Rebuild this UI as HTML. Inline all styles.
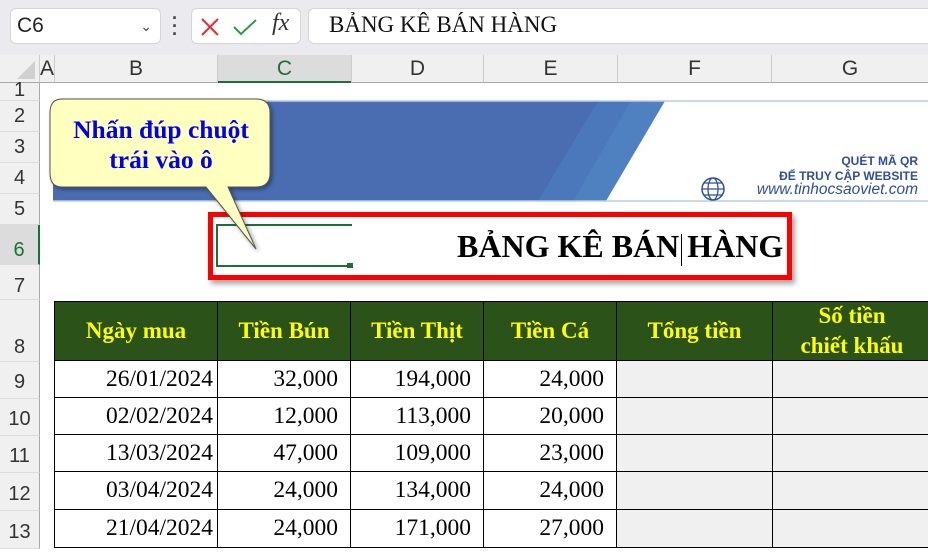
<!DOCTYPE html>
<html><head><meta charset="utf-8"><style>
*{margin:0;padding:0;box-sizing:border-box}
body{width:928px;height:549px;overflow:hidden;background:#fff;position:relative;font-family:"Liberation Sans",sans-serif}
.a{position:absolute}
.top{left:0;top:0;width:928px;height:55px;background:#ebebef}
.box{background:#fff;border:1px solid #d6d6da;border-radius:6px}
.ch{top:55px;height:28px;background:#f0f0f0;border-bottom:1px solid #a8a8a8;color:#333;font-size:21px;text-align:center;line-height:28px}
.rh{left:0;width:40px;background:#f0f0f0;border-bottom:1px solid #dcdcdc;border-right:1px solid #a8a8a8;color:#333;font-size:20px;text-align:center}
.serif{font-family:"Liberation Serif",serif}
.hd{background:#2b5219;color:#ffff00;font-weight:bold;font-size:23px;text-align:center;border:1.5px solid #000;display:flex;align-items:center;justify-content:center;line-height:30px}
.dc{border:1px solid #000;text-align:right;padding-right:12px}
</style></head><body>
<div class="a top"></div>
<div class="a box" style="left:10px;top:8px;width:151px;height:36px;font-size:21px;line-height:34px;padding-left:6px;color:#222">C6<span style="position:absolute;right:8px;top:0;font-size:14px;color:#444">&#8964;</span></div>
<div class="a" style="left:172px;top:14px;width:4px;font-size:18px;line-height:8px;color:#444;font-weight:bold">·<br>·<br>·</div>
<div class="a box" style="left:191px;top:8px;width:110px;height:36px"></div>
<svg class="a" style="left:199px;top:16px" width="22" height="22"><path d="M3 3L19 19M19 3L3 19" stroke="#e03030" stroke-width="2"/></svg>
<svg class="a" style="left:231px;top:16px" width="28" height="22"><path d="M3 11L10 18L25 4" stroke="#2a9a45" stroke-width="2" fill="none"/></svg>
<div class="a serif" style="left:272px;top:10px;font-size:24px;font-style:italic;color:#333">fx</div>
<div class="a box" style="left:308px;top:8px;width:640px;height:36px"></div>
<div class="a serif" style="left:329px;top:12px;font-size:23px;color:#111">BẢNG KÊ BÁN HÀNG</div>

<div class="a ch" style="left:0;width:40px;border-right:1px solid #ccc"></div>
<svg class="a" style="left:16px;top:60px" width="20" height="20"><path d="M19 1L19 19L1 19Z" fill="#d0d0d0"/></svg>
<div class="a ch" style="left:40px;width:15px;border-right:1px solid #ccc">A</div>
<div class="a ch" style="left:55px;width:163px;border-right:1px solid #ccc">B</div>
<div class="a ch" style="left:218px;width:133px;background:#dcdcdc;color:#1e6e3c;border-bottom:2px solid #1e6e3c">C</div>
<div class="a ch" style="left:351px;width:133px;border-left:1px solid #ccc;border-right:1px solid #ccc">D</div>
<div class="a ch" style="left:484px;width:134px;border-right:1px solid #ccc">E</div>
<div class="a ch" style="left:618px;width:154px;border-right:1px solid #ccc">F</div>
<div class="a ch" style="left:772px;width:156px">G</div>

<div class="a rh" style="top:83px;height:18px;line-height:14px">1</div>
<div class="a rh" style="top:101px;height:31px;line-height:31px">2</div>
<div class="a rh" style="top:132px;height:31px;line-height:31px">3</div>
<div class="a rh" style="top:163px;height:31px;line-height:31px">4</div>
<div class="a rh" style="top:194px;height:31px;line-height:31px">5</div>
<div class="a rh" style="top:225px;height:40px;line-height:50px;background:#dcdcdc;color:#1e6e3c;border-right:2px solid #1e6e3c">6</div>
<div class="a rh" style="top:265px;height:35px;line-height:42px">7</div>
<div class="a rh" style="top:300px;height:62px;line-height:94px">8</div>
<div class="a rh" style="top:362px;height:37px;line-height:40px">9</div>
<div class="a rh" style="top:399px;height:37px;line-height:40px">10</div>
<div class="a rh" style="top:436px;height:37px;line-height:40px">11</div>
<div class="a rh" style="top:473px;height:38px;line-height:42px">12</div>
<div class="a rh" style="top:511px;height:38px;line-height:42px">13</div>

<svg class="a" style="left:53px;top:100px" width="875" height="102">
<rect x="0" y="0" width="875" height="102" fill="#fff"/>
<path d="M0 1H612L553 101H0Z" fill="#4f80c0"/>
<path d="M0 1H578L520 101H0Z" fill="#4a78ba"/>
<path d="M0 1H545L485 101H0Z" fill="#4a6db2"/>
<line x1="0" y1="1" x2="875" y2="1" stroke="#b8cde8" stroke-width="1.5"/>
<line x1="0" y1="101" x2="875" y2="101" stroke="#b8cde8" stroke-width="1.5"/>
<circle cx="660" cy="89" r="11" fill="none" stroke="#2f4f98" stroke-width="1.5"/>
<ellipse cx="660" cy="89" rx="5" ry="11" fill="none" stroke="#2f4f98" stroke-width="1.3"/>
<path d="M649 89H671M651 83H669M651 95H669" stroke="#2f4f98" stroke-width="1.3"/>
</svg>
<div class="a" style="left:700px;top:154px;width:218px;text-align:right;color:#2f4f98;font-weight:bold;font-size:12px;line-height:15px">QUÉT MÃ QR<br>ĐỂ TRUY CẬP WEBSITE</div>
<div class="a" style="left:700px;top:181px;width:218px;text-align:right;color:#2f4f98;font-style:italic;font-size:15.5px">www.tinhocsaoviet.com</div>

<div class="a" style="left:216px;top:224px;width:136px;height:43px;border:2px solid #1e6e3c;border-right:none"></div>
<div class="a" style="left:347px;top:263px;width:6px;height:5px;background:#1e6e3c"></div>
<div class="a" style="left:208px;top:212px;width:584px;height:68px;border:5px solid #f00;box-shadow:3px 4px 5px rgba(0,0,0,.35)"></div>
<div class="a serif" style="left:457px;top:228px;font-size:32px;font-weight:bold;color:#000;white-space:nowrap">BẢNG KÊ BÁN<span style="display:inline-block;width:1px;height:32px;background:#000;vertical-align:middle;margin:0 5px 0 2px"></span>HÀNG</div>

<svg class="a" style="left:48px;top:97px" width="230" height="160">
<defs><filter id="s"><feDropShadow dx="2" dy="2" stdDeviation="2" flood-opacity=".4"/></filter></defs>
<path d="M14 2H208Q222 2 222 16V76Q222 90 208 90H180L208 152L158 90H14Q2 90 2 76V16Q2 2 14 2Z" fill="#ffffc0" stroke="#555" stroke-width="1" filter="url(#s)"/>
</svg>
<div class="a serif" style="left:50px;top:115px;width:222px;text-align:center;color:#0000ee;font-weight:bold;font-size:25.5px;line-height:30px;white-space:nowrap">Nhấn đúp chuột<br>trái vào ô</div>

<div class="a hd serif" style="left:54px;top:301px;width:164px;height:60px">Ngày mua</div>
<div class="a hd serif" style="left:217px;top:301px;width:134px;height:60px">Tiền Bún</div>
<div class="a hd serif" style="left:350px;top:301px;width:134px;height:60px">Tiền Thịt</div>
<div class="a hd serif" style="left:483px;top:301px;width:134px;height:60px">Tiền Cá</div>
<div class="a hd serif" style="left:616px;top:301px;width:157px;height:60px">Tổng tiền</div>
<div class="a hd serif" style="left:772px;top:301px;width:160px;height:60px">Số tiền<br>chiết khấu</div>

<div class="a" style="left:54px;top:360px">
<table style="border-collapse:collapse;table-layout:fixed;width:879px;font-family:'Liberation Serif',serif;font-size:23.5px">
<colgroup><col style="width:163px"><col style="width:133px"><col style="width:133px"><col style="width:133px"><col style="width:156px"><col style="width:161px"></colgroup>
<tr style="height:37px"><td class="dc" style="padding-right:4px">26/01/2024</td><td class="dc">32,000</td><td class="dc">194,000</td><td class="dc">24,000</td><td class="dc" style="background:#f0f0f0"></td><td class="dc" style="background:#f0f0f0"></td></tr>
<tr style="height:37px"><td class="dc" style="padding-right:4px">02/02/2024</td><td class="dc">12,000</td><td class="dc">113,000</td><td class="dc">20,000</td><td class="dc" style="background:#f0f0f0"></td><td class="dc" style="background:#f0f0f0"></td></tr>
<tr style="height:37px"><td class="dc" style="padding-right:4px">13/03/2024</td><td class="dc">47,000</td><td class="dc">109,000</td><td class="dc">23,000</td><td class="dc" style="background:#f0f0f0"></td><td class="dc" style="background:#f0f0f0"></td></tr>
<tr style="height:38px"><td class="dc" style="padding-right:4px">03/04/2024</td><td class="dc">24,000</td><td class="dc">134,000</td><td class="dc">24,000</td><td class="dc" style="background:#f0f0f0"></td><td class="dc" style="background:#f0f0f0"></td></tr>
<tr style="height:38px"><td class="dc" style="padding-right:4px">21/04/2024</td><td class="dc">24,000</td><td class="dc">171,000</td><td class="dc">27,000</td><td class="dc" style="background:#f0f0f0"></td><td class="dc" style="background:#f0f0f0"></td></tr>
</table></div>
</body></html>
